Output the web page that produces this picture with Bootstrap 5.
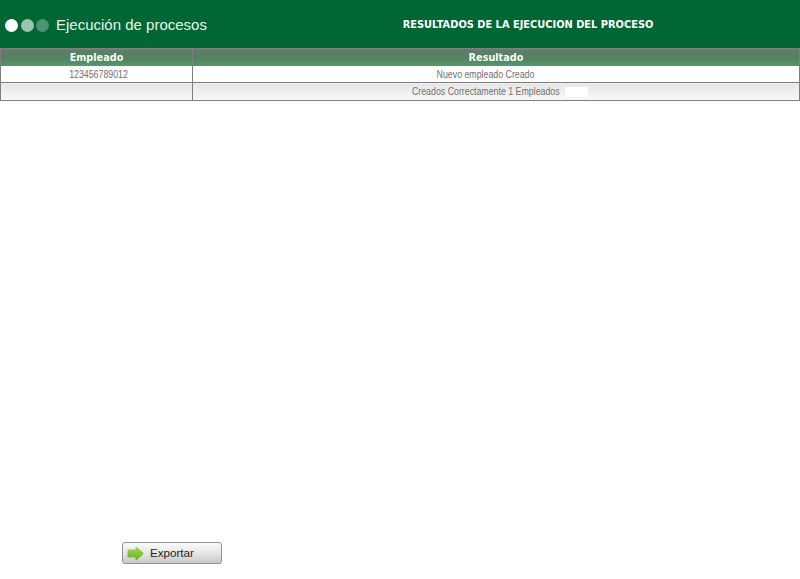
<!DOCTYPE html>
<html lang="es">
<head>
    <meta charset="UTF-8">
    <meta name="viewport" content="width=device-width, initial-scale=1.0">
    <title>Ejecución de procesos</title>
    <link href="https://cdn.jsdelivr.net/npm/bootstrap@5.3.0/dist/css/bootstrap.min.css" rel="stylesheet">
    <style>
        html, body { height: 100%; }
        body { background: #fff; overflow: hidden; }
        .page-wrap { height: 579px; }
        .top-bar { height: 48px; background: #006633; color: #fff; }
        .title-side { width: 256px; padding-left: 5px; padding-top: 2px; gap: 2.5px; }
        .dot-light { width: 13px; height: 13px; border-radius: 50%; background: #fff; }
        .dot-mid { background: #9ec4ad; }
        .dot-dark { background: #4d9470; }
        .title-text { font-family: "Liberation Sans", Arial, sans-serif; font-size: 15px; color: #e6f5ec; margin-left: 4.5px; }
        .result-title { font-family: "DejaVu Sans", Tahoma, sans-serif; font-weight: 700; font-size: 9.85px; width: 544px; padding-top: 3px; }
        .result-table { width: 800px; table-layout: fixed; border-collapse: collapse; margin: 0; }
        .result-table th, .result-table td { border: 1px solid #7f7f7f; padding: 0; text-align: center; vertical-align: middle; }
        .result-table th { height: 17px; padding-top: 2px; background: linear-gradient(#5e7f68 0%, #55805f 55%, #4f9a6b 100%); color: #f2fff6; font-family: "DejaVu Sans", Tahoma, sans-serif; font-size: 9.7px; font-weight: 700; line-height: 1; }
        .result-table td { height: 17px; color: #707070; font-family: "Liberation Sans", Arial, sans-serif; font-size: 8.8px; line-height: 1; }
        .result-table .col-emp { width: 192px; }
        .row-plain td { background: #fff; }
        .row-plain .cell-id { padding-left: 4px; }
        .row-plain .cell-offset { padding-right: 21px; }
        .row-shade td { height: 18px; background: linear-gradient(#e6e6e6, #f8f8f8); }
        .row-shade .cell-total { padding-left: 8px; }
        .cell-text { display: inline-block; transform: scaleY(1.25); }
        .smudge { display: inline-block; width: 23px; height: 10px; background: #fff; margin-left: 3px; vertical-align: middle; }
        .export-row { padding-left: 122px; padding-bottom: 15px; }
        .export-btn { width: 100px; height: 22px; padding: 0 0 0 4px; gap: 6px; border: 1px solid #8f9491; border-radius: 3px; background: linear-gradient(#fafafa, #e8e8e8 45%, #c9c9c9); font-family: "Liberation Sans", Arial, sans-serif; font-size: 11.6px; color: #222; }
    </style>
</head>
<body>
    <div class="page-wrap d-flex flex-column">
        <div class="top-bar d-flex align-items-center">
            <div class="title-side d-flex align-items-center">
                <span class="dot-light"></span>
                <span class="dot-light dot-mid"></span>
                <span class="dot-light dot-dark"></span>
                <span class="title-text">Ejecución de procesos</span>
            </div>
            <div class="result-title text-center">RESULTADOS DE LA EJECUCION DEL PROCESO</div>
        </div>

        <table class="result-table">
            <thead>
                <tr>
                    <th class="col-emp">Empleado</th>
                    <th>Resultado</th>
                </tr>
            </thead>
            <tbody>
                <tr class="row-plain">
                    <td class="cell-id"><span class="cell-text">123456789012</span></td>
                    <td class="cell-offset"><span class="cell-text">Nuevo empleado Creado</span></td>
                </tr>
                <tr class="row-shade">
                    <td></td>
                    <td class="cell-total"><span class="cell-text">Creados Correctamente 1 Empleados</span> <span class="smudge"></span></td>
                </tr>
            </tbody>
        </table>

        <div class="export-row mt-auto">
            <button type="button" class="export-btn d-flex align-items-center">
                <svg width="17" height="15" viewBox="0 0 17 15">
                    <defs>
                        <linearGradient id="arrowFill" x1="0" y1="0" x2="0" y2="1">
                            <stop offset="0" stop-color="#a6dc4e"/>
                            <stop offset="1" stop-color="#62ad1c"/>
                        </linearGradient>
                    </defs>
                    <path d="M1.5 3.5 H8.5 V1 Q8.5 0 9.5 0.7 L16.2 6.8 Q16.8 7.5 16.2 8.2 L9.5 14.3 Q8.5 15 8.5 14 V11.5 H1.5 Q0.5 11.5 0.5 10.5 V4.5 Q0.5 3.5 1.5 3.5 Z" fill="url(#arrowFill)"/>
                </svg>
                <span>Exportar</span>
            </button>
        </div>
    </div>
</body>
</html>
